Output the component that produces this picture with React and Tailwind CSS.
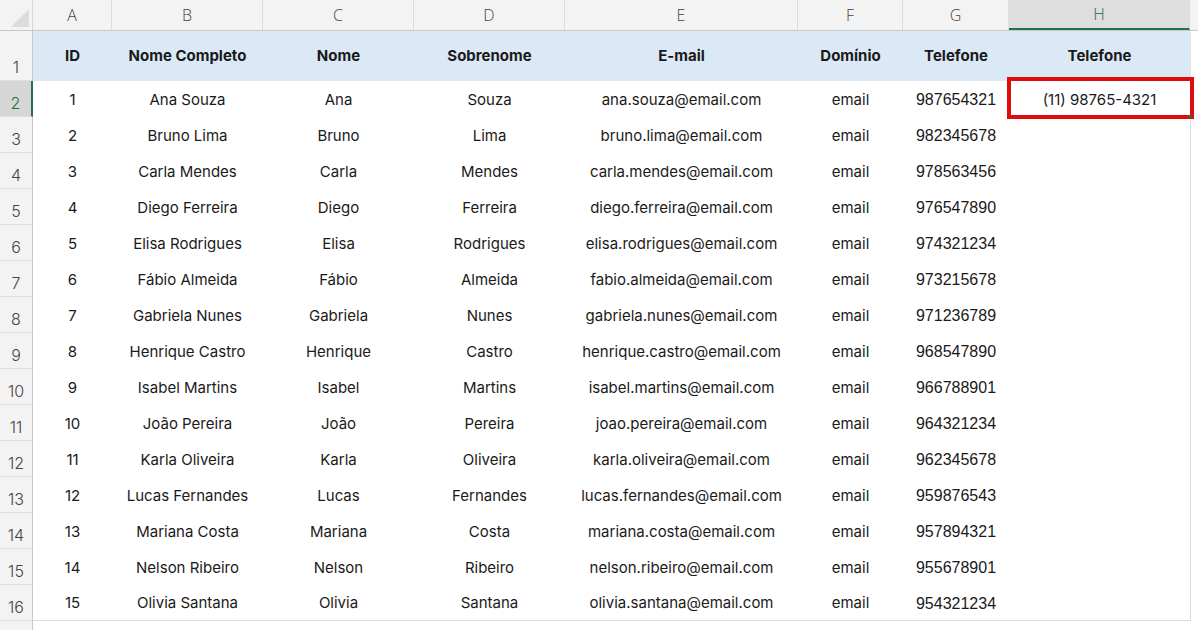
import React from 'react';

const cols = [
    { key: 'A', w: 'w-[79px]' },
    { key: 'B', w: 'w-[151px]' },
    { key: 'C', w: 'w-[151px]' },
    { key: 'D', w: 'w-[151px]' },
    { key: 'E', w: 'w-[233px]' },
    { key: 'F', w: 'w-[105px]' },
    { key: 'G', w: 'w-[106px]' },
    { key: 'H', w: 'w-[181px]' },
];

const headers = ['ID', 'Nome Completo', 'Nome', 'Sobrenome', 'E-mail', 'Domínio', 'Telefone', 'Telefone'];

const people = [
    ['Ana Souza', 'Ana', 'Souza', 'ana.souza@email.com', '987654321'],
    ['Bruno Lima', 'Bruno', 'Lima', 'bruno.lima@email.com', '982345678'],
    ['Carla Mendes', 'Carla', 'Mendes', 'carla.mendes@email.com', '978563456'],
    ['Diego Ferreira', 'Diego', 'Ferreira', 'diego.ferreira@email.com', '976547890'],
    ['Elisa Rodrigues', 'Elisa', 'Rodrigues', 'elisa.rodrigues@email.com', '974321234'],
    ['Fábio Almeida', 'Fábio', 'Almeida', 'fabio.almeida@email.com', '973215678'],
    ['Gabriela Nunes', 'Gabriela', 'Nunes', 'gabriela.nunes@email.com', '971236789'],
    ['Henrique Castro', 'Henrique', 'Castro', 'henrique.castro@email.com', '968547890'],
    ['Isabel Martins', 'Isabel', 'Martins', 'isabel.martins@email.com', '966788901'],
    ['João Pereira', 'João', 'Pereira', 'joao.pereira@email.com', '964321234'],
    ['Karla Oliveira', 'Karla', 'Oliveira', 'karla.oliveira@email.com', '962345678'],
    ['Lucas Fernandes', 'Lucas', 'Fernandes', 'lucas.fernandes@email.com', '959876543'],
    ['Mariana Costa', 'Mariana', 'Costa', 'mariana.costa@email.com', '957894321'],
    ['Nelson Ribeiro', 'Nelson', 'Ribeiro', 'nelson.ribeiro@email.com', '955678901'],
    ['Olivia Santana', 'Olivia', 'Santana', 'olivia.santana@email.com', '954321234'],
];

const RowNum = ({ n, active, tall }) => (
    <div
        className={`w-[33px] shrink-0 flex items-end justify-center pb-[1px] text-[16px] font-light border-b border-[#dedede] ${tall ? 'h-[50px]' : 'h-[36px]'} ${
            active ? 'bg-[#d6d6d6] text-[#1e6b41] border-r-2 border-r-[#217346]' : 'bg-[#f3f3f3] text-[#444] border-r border-r-[#c8c8c8]'
        }`}
    >
        {n}
    </div>
);

export default function App() {
    return (
        <div className="w-[1198px] h-[630px] overflow-hidden bg-white font-['Inter',sans-serif] text-[15px] text-[#1a1a1a]">
            {/* Column letters */}
            <div className="flex h-[31px] bg-[#f3f3f3] border-b border-[#c8c8c8]">
                <div className="w-[33px] shrink-0 relative border-r border-[#d6d6d6]">
                    <svg className="absolute right-[3px] bottom-[3px]" width="18" height="18" viewBox="0 0 18 18">
                        <polygon points="18,0 18,18 0,18" fill="#dcdcdc" />
                    </svg>
                </div>
                {cols.map((c) => (
                    <div
                        key={c.key}
                        className={`${c.w} shrink-0 flex items-center justify-center font-['Open_Sans',sans-serif] font-light text-[16px] border-r border-[#dcdcdc] ${
                            c.key === 'H' ? 'bg-[#dedede] text-[#1e6b41] border-b-2 border-b-[#217346]' : 'text-[#444]'
                        }`}
                    >
                        {c.key}
                    </div>
                ))}
                <div className="flex-1" />
            </div>

            {/* Row 1: table headers */}
            <div className="flex">
                <RowNum n={1} tall />
                <div className="flex h-[50px] bg-[#dbe9f7]">
                    {headers.map((h, i) => (
                        <div key={i} className={`${cols[i].w} shrink-0 flex items-center justify-center pt-[1px] font-bold`}>
                            {h}
                        </div>
                    ))}
                </div>
                <div className="flex-1 border-l border-[#e2e2e2]" />
            </div>

            {/* Data rows */}
            {people.map((p, idx) => (
                <div key={idx} className="flex">
                    <RowNum n={idx + 2} active={idx === 0} />
                    <div className={`flex h-[36px] pt-[2px] ${idx === people.length - 1 ? 'border-b border-[#dcdcdc]' : ''}`}>
                        <div className="w-[79px] shrink-0 flex items-center justify-center">{idx + 1}</div>
                        <div className="w-[151px] shrink-0 flex items-center justify-center">{p[0]}</div>
                        <div className="w-[151px] shrink-0 flex items-center justify-center">{p[1]}</div>
                        <div className="w-[151px] shrink-0 flex items-center justify-center">{p[2]}</div>
                        <div className="w-[233px] shrink-0 flex items-center justify-center">{p[3]}</div>
                        <div className="w-[105px] shrink-0 flex items-center justify-center">email</div>
                        <div className="w-[106px] shrink-0 flex items-center justify-center font-['Liberation_Sans',sans-serif] text-[16px]">
                            {p[4]}
                        </div>
                        <div className="w-[181px] shrink-0 relative flex items-center justify-center">
                            {idx === 0 && (
                                <>
                                    (11) 98765-4321
                                    <div className="absolute -left-[2px] -right-[4px] -top-[6px] -bottom-[2px] border-[4px] border-[#e00b0b]" />
                                    <div className="absolute right-[-2px] bottom-[-1px] w-[3px] h-[3px] bg-[#217346]" />
                                </>
                            )}
                        </div>
                    </div>
                    <div className="flex-1 border-l border-[#dcdcdc]" />
                </div>
            ))}

            {/* Row 17 */}
            <div className="flex">
                <RowNum n={17} />
                <div className="flex-1" />
            </div>
        </div>
    );
}
